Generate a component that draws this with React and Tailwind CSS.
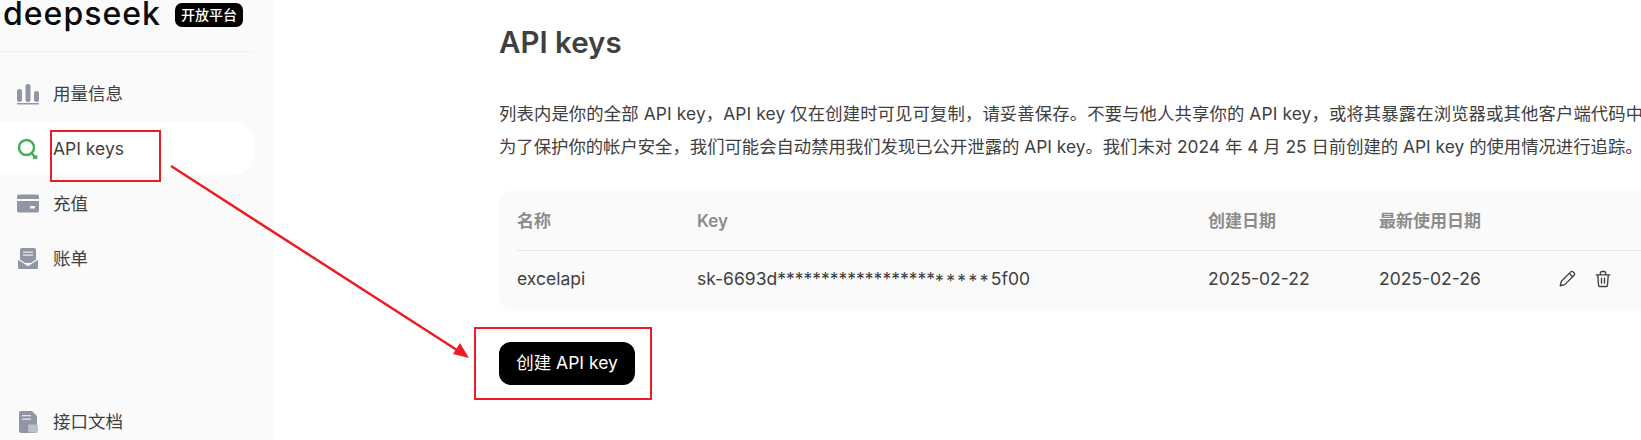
const font = { fontFamily: '"Inter", "Noto Sans CJK SC", sans-serif' };

function BarsIcon() {
  return (
    <svg width="24" height="24" viewBox="0 0 24 24" fill="#9196a6">
      <rect x="1" y="7" width="5" height="13" rx="2.5" />
      <rect x="9.5" y="2" width="5" height="18" rx="2.5" />
      <rect x="18" y="9" width="5" height="11" rx="2.5" />
      <rect x="1" y="21" width="22" height="1.5" />
    </svg>
  );
}

function KeyIcon() {
  return (
    <svg width="24" height="24" viewBox="0 0 24 24" fill="none" stroke="#3fae56" strokeWidth="2.4">
      <circle cx="10.5" cy="10.5" r="7.5" />
      <path d="M15.5 16l4.5 5M18 21l2.5-1.5" strokeLinecap="round" />
    </svg>
  );
}

function CardIcon() {
  return (
    <svg width="24" height="24" viewBox="0 0 24 24">
      <rect x="1" y="2.5" width="22" height="18" rx="2" fill="#9196a6" />
      <rect x="1" y="7" width="22" height="2" fill="#fafafa" />
      <rect x="14" y="14" width="5" height="2.5" rx="0.5" fill="#fafafa" />
    </svg>
  );
}

function MailIcon() {
  return (
    <svg width="24" height="24" viewBox="0 0 24 24">
      <rect x="4" y="1" width="16" height="15" rx="2" fill="#9196a6" />
      <rect x="7" y="4.5" width="10" height="1.3" fill="#e4e5ea" />
      <rect x="7" y="7.5" width="10" height="1.3" fill="#e4e5ea" />
      <path d="M12 18.5L4 13.5l-2-1.5v8.5A1.5 1.5 0 0 0 3.5 22h17a1.5 1.5 0 0 0 1.5-1.5V12l-2 1.5z" fill="#9196a6" />
      <path d="M2 12l10 6.5L22 12" fill="none" stroke="#fafafa" strokeWidth="1.2" />
    </svg>
  );
}

function DocIcon() {
  return (
    <svg width="24" height="24" viewBox="0 0 24 24">
      <path d="M5 1h11l5 5v15a2 2 0 0 1-2 2H5a2 2 0 0 1-2-2V3a2 2 0 0 1 2-2z" fill="#9196a6" />
      <rect x="6" y="5" width="9" height="1.3" fill="#e4e5ea" />
      <rect x="6" y="8.5" width="9" height="1.3" fill="#e4e5ea" />
      <rect x="12" y="14.5" width="10" height="8" rx="1.5" fill="#bcbfca" />
    </svg>
  );
}

function NavItem({ icon, label, active, className = "" }) {
  return (
    <div
      className={`flex items-center gap-[13px] h-[53px] my-[1px] pl-[16px] rounded-r-[20px] text-[17.5px] text-[#404040] ${
        active ? "bg-white" : ""
      } ${className}`}
    >
      {icon}
      <span className="pt-[2px]">{label}</span>
    </div>
  );
}

export default function App() {
  return (
    <div className="relative flex h-[440px] w-[1641px] overflow-hidden bg-white" style={font}>
      {/* Sidebar */}
      <aside className="flex w-[274px] shrink-0 flex-col bg-[#fafafa] pr-[20px]">
        <div className="flex h-[52px] items-start border-b border-[#f0f0f0] pl-[3px]">
          <span className="w-[172px] text-[32px] leading-[27px] font-medium tracking-[1px] text-[#0a0a0a]">
            deepseek
          </span>
          <span className="mt-[3px] rounded-[7px] bg-black px-[6px] py-[1px] text-[14px] leading-[22px] font-medium text-white">
            开放平台
          </span>
        </div>
        <nav className="mt-[14px] flex flex-1 flex-col">
          <NavItem icon={<BarsIcon />} label="用量信息" />
          <NavItem icon={<KeyIcon />} label="API keys" active />
          <NavItem icon={<CardIcon />} label="充值" />
          <NavItem icon={<MailIcon />} label="账单" />
          <NavItem icon={<DocIcon />} label="接口文档" className="mt-auto mb-[-8px]" />
        </nav>
      </aside>

      {/* Main */}
      <main className="min-w-0 flex-1 pl-[225px] text-[#404040]">
        <h1 className="mt-[24px] text-[29.5px] leading-[36px] font-semibold">API keys</h1>
        <div className="mt-[37px] text-[17.35px] leading-[33px] whitespace-nowrap">
          <p className="tracking-[0.12px]">列表内是你的全部 API key，API key 仅在创建时可见可复制，请妥善保存。不要与他人共享你的 API key，或将其暴露在浏览器或其他客户端代码中</p>
          <p>为了保护你的帐户安全，我们可能会自动禁用我们发现已公开泄露的 API key。我们未对 2024 年 4 月 25 日前创建的 API key 的使用情况进行追踪。</p>
        </div>

        <div className="mt-[28px] w-[1200px] rounded-[14px] bg-[#fafafa] px-[18px]">
          <div className="grid h-[60px] grid-cols-[180px_511px_171px_179px_1fr] items-center border-b border-[#e5e5e5] pt-[3px] text-[17px] font-semibold text-[#8c8c8c]">
            <span>名称</span>
            <span>Key</span>
            <span>创建日期</span>
            <span>最新使用日期</span>
          </div>
          <div className="grid h-[60px] grid-cols-[180px_511px_171px_179px_1fr] items-center pb-[4px] text-[17.5px]">
            <span>excelapi</span>
            <span>
              sk-6693d******************
              <span className="relative top-[2px] tracking-[2.4px]">*****</span>5f00
            </span>
            <span>2025-02-22</span>
            <span>2025-02-26</span>
            <span className="flex items-center gap-[18px]">
              <svg width="18" height="18" viewBox="0 0 24 24" fill="none" stroke="#404040" strokeWidth="1.8" strokeLinejoin="round">
                <path d="M3 21l1.5-6L17 2.5a2.1 2.1 0 0 1 3 0l1.5 1.5a2.1 2.1 0 0 1 0 3L9 19.5z" />
                <path d="M15 4.5l4.5 4.5" />
              </svg>
              <svg width="18" height="18" viewBox="0 0 24 24" fill="none" stroke="#404040" strokeWidth="1.8" strokeLinecap="round" strokeLinejoin="round">
                <path d="M3 6.5h18M8.5 6.5V4a2 2 0 0 1 2-2h3a2 2 0 0 1 2 2v2.5M5 6.5l1 13a2.5 2.5 0 0 0 2.5 2.5h7a2.5 2.5 0 0 0 2.5-2.5l1-13M10 11v6.5M14 11v6.5" />
              </svg>
            </span>
          </div>
        </div>

        <button className="mt-[31px] h-[43px] w-[136px] rounded-[12px] bg-black text-[17.5px] text-white">
          创建 API key
        </button>
      </main>

      {/* Annotations */}
      <div className="absolute left-[50px] top-[130px] h-[52px] w-[111px] border-2 border-[#ed1c24]" />
      <div className="absolute left-[474px] top-[327px] h-[73px] w-[178px] border-2 border-[#ed1c24]" />
      <svg className="absolute left-0 top-0" width="1641" height="440">
        <line x1="171" y1="166" x2="460" y2="352" stroke="#ed1c24" strokeWidth="2.5" />
        <polygon points="469,358 453,354 460,343" fill="#ed1c24" />
      </svg>
    </div>
  );
}
